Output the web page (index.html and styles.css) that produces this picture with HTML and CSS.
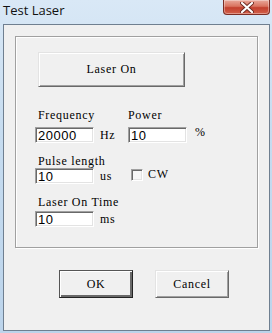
FILE: index.html
```html
<!DOCTYPE html>
<html lang="en">
<head>
    <meta charset="UTF-8">
    <meta name="viewport" content="width=device-width, initial-scale=1.0">
    <title>Test Laser</title>
    <link rel="stylesheet" href="styles.css">
</head>
<body>
    <div class="window">
        <div class="titlebar">
            <span class="title">Test Laser</span>
            <button class="close-btn" title="Close">
                <svg width="14" height="11" viewBox="0 0 14 11">
                    <path d="M2 1 L12 10 M12 1 L2 10" stroke="#6b2a22" stroke-width="4" stroke-linecap="round"/>
                    <path d="M2 1 L12 10 M12 1 L2 10" stroke="#ffffff" stroke-width="2.2" stroke-linecap="round"/>
                </svg>
            </button>
        </div>

        <div class="client">
            <div class="group">
                <button class="btn laser-btn">Laser On</button>

                <div class="row row-first">
                    <div class="field">
                        <label class="field-label" for="frequency">Frequency</label>
                        <div class="entry">
                            <input class="text-box" id="frequency" type="text" value="20000">
                            <span class="unit">Hz</span>
                        </div>
                    </div>
                    <div class="field">
                        <label class="field-label flush" for="power">Power</label>
                        <div class="entry">
                            <input class="text-box" id="power" type="text" value="10">
                            <span class="unit unit-raised">%</span>
                        </div>
                    </div>
                </div>

                <div class="row row-second">
                    <div class="field">
                        <label class="field-label" for="pulse">Pulse length</label>
                        <div class="entry entry-tight">
                            <input class="text-box" id="pulse" type="text" value="10">
                            <span class="unit">us</span>
                        </div>
                    </div>
                    <div class="check-field">
                        <span class="check-box"></span>
                        <span class="check-label">CW</span>
                    </div>
                </div>

                <div class="row row-third">
                    <div class="field">
                        <label class="field-label" for="ontime">Laser On Time</label>
                        <div class="entry entry-mid">
                            <input class="text-box" id="ontime" type="text" value="10">
                            <span class="unit">ms</span>
                        </div>
                    </div>
                </div>
            </div>

            <div class="actions">
                <button class="btn ok-btn">OK</button>
                <button class="btn cancel-btn">Cancel</button>
            </div>
        </div>
    </div>
</body>
</html>
```

FILE: styles.css
```css
* {
    margin: 0;
    padding: 0;
    box-sizing: border-box;
}

body {
    width: 272px;
    height: 333px;
    overflow: hidden;
    background: #c3d8ed;
}

.window {
    width: 272px;
    height: 333px;
    display: flex;
    flex-direction: column;
    padding: 0 2px 2px 3px;
    background: linear-gradient(180deg, #d9e8f6 0%, #c6dcf0 40%, #bcd4eb 100%);
}

.titlebar {
    height: 24px;
    display: flex;
    justify-content: space-between;
    align-items: flex-start;
}

.title {
    font-family: "Open Sans", "Noto Sans", sans-serif;
    font-size: 13px;
    line-height: 16px;
    margin-top: 2px;
    color: #111;
}

.close-btn {
    width: 47px;
    height: 15px;
    border: 1px solid #7b2d24;
    border-top: none;
    border-radius: 0 0 4px 4px;
    background: linear-gradient(180deg, #e9a99b 0%, #d9735f 45%, #c3402e 55%, #d2614b 100%);
    display: flex;
    align-items: center;
    justify-content: center;
    box-shadow: inset 0 0 0 1px rgba(255,255,255,0.35);
}

.client {
    flex: 1;
    border: 1px solid #6f7f90;
    background: #f0f0f0;
    padding: 11px 0 0 11px;
}

.group {
    width: 243px;
    height: 212px;
    border: 1px solid #a0a0a0;
    box-shadow: inset 1px 1px #ffffff, 1px 1px #ffffff;
    padding: 15px 0 0 19px;
}

.btn {
    font-family: "Liberation Serif", "Times New Roman", serif;
    font-size: 12px;
    letter-spacing: 0.7px;
    color: #000;
    background: #f0f0f0;
    border: 1px solid;
    border-color: #e3e3e3 #696969 #696969 #e3e3e3;
    box-shadow: inset 1px 1px #ffffff, inset -1px -1px #a0a0a0;
}

.laser-btn {
    display: block;
    width: 147px;
    height: 35px;
    margin-left: 3px;
}

.row {
    display: flex;
}

.row-first {
    margin-top: 22px;
}

.row-second,
.row-third {
    margin-top: 12px;
}

.field {
    width: 93px;
    display: flex;
    flex-direction: column;
}

.field-label {
    font-family: "Liberation Serif", "Times New Roman", serif;
    font-size: 12px;
    line-height: 12px;
    letter-spacing: 0.7px;
    padding-left: 3px;
    color: #000;
    white-space: nowrap;
}

.field-label.flush {
    padding-left: 0;
}

.entry {
    display: flex;
    align-items: flex-end;
    margin-top: 6px;
    height: 16px;
}

.entry-tight {
    margin-top: 1px;
}

.entry-mid {
    margin-top: 3px;
}

.text-box {
    width: 59px;
    height: 16px;
    border: 1px solid;
    border-color: #a0a0a0 #ffffff #ffffff #a0a0a0;
    box-shadow: inset 1px 1px #696969, inset -1px -1px #e3e3e3;
    background: #ffffff;
    font-family: "Liberation Sans", Arial, sans-serif;
    font-size: 13px;
    letter-spacing: 0.5px;
    padding: 0 0 0 2px;
    color: #000;
    outline: none;
}

.unit {
    font-family: "Liberation Serif", "Times New Roman", serif;
    font-size: 12px;
    line-height: 12px;
    letter-spacing: 0.7px;
    margin-left: 6px;
    margin-bottom: 2px;
    color: #000;
}

.unit-raised {
    align-self: flex-start;
    margin-bottom: 0;
    margin-top: -1px;
    margin-left: 8px;
}

.check-field {
    display: flex;
    align-items: center;
    margin-left: 3px;
    margin-top: 13px;
    height: 14px;
}

.check-box {
    width: 12px;
    height: 12px;
    border: 1px solid;
    border-color: #a0a0a0 #ffffff #ffffff #a0a0a0;
    box-shadow: inset 1px 1px #696969, inset -1px -1px #e3e3e3;
    background: #f6f6f6;
}

.check-label {
    font-family: "Liberation Serif", "Times New Roman", serif;
    font-size: 12px;
    line-height: 12px;
    letter-spacing: 0.7px;
    margin-left: 5px;
    margin-top: -2px;
}

.actions {
    display: flex;
    gap: 22px;
    margin-top: 22px;
    padding-left: 44px;
}

.ok-btn,
.cancel-btn {
    width: 74px;
    height: 28px;
}

.ok-btn {
    border-color: #555 #222 #222 #555;
    box-shadow: inset 1px 1px #ffffff, inset -2px -2px #696969;
}
```
